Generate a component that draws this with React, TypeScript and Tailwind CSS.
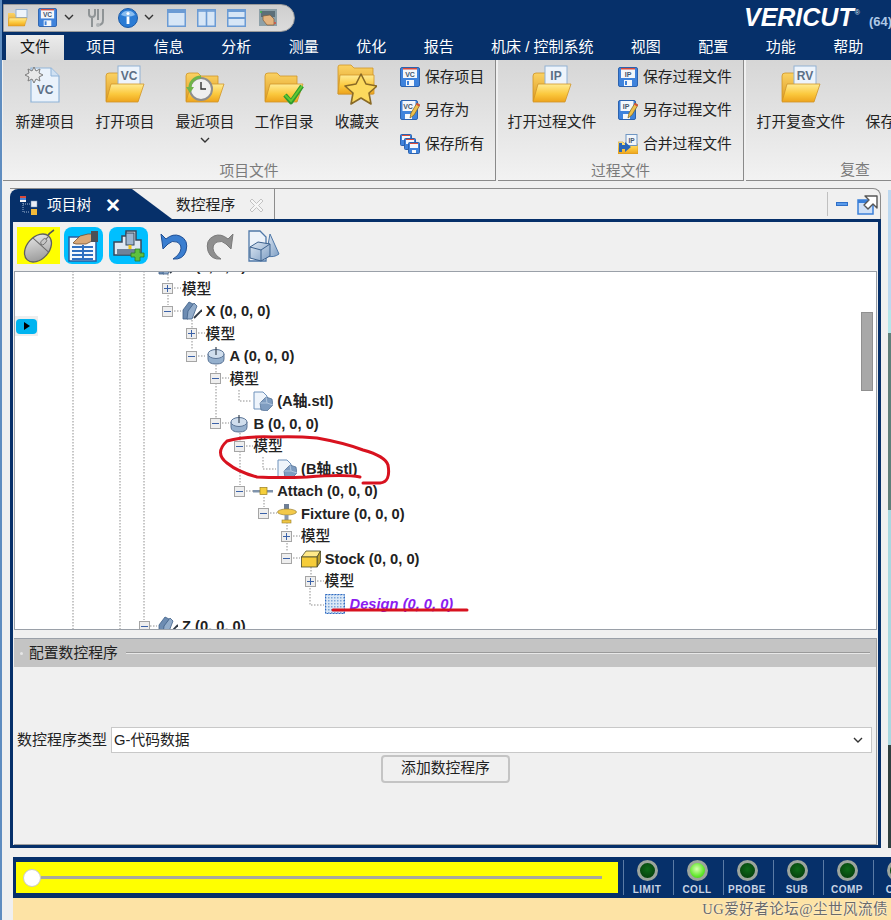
import { ReactNode } from 'react';

const NAVY = 'bg-[#06306a]';

type TreeRow = {
  depth: number;
  toggle?: '+' | '-';
  icon?: ReactNode;
  label: string;
  kind?: 'model' | 'node' | 'design';
};

function Defs() {
  return (
    <svg width="0" height="0" className="block">
      <defs>
        <linearGradient id="folderFront" x1="0" y1="0" x2="0" y2="1">
          <stop offset="0" stopColor="#ffeb94" />
          <stop offset="0.55" stopColor="#fbc93e" />
          <stop offset="1" stopColor="#eda31c" />
        </linearGradient>
        <linearGradient id="folderBack" x1="0" y1="0" x2="0" y2="1">
          <stop offset="0" stopColor="#fbd263" />
          <stop offset="1" stopColor="#dc9a22" />
        </linearGradient>
        <linearGradient id="steel" x1="0" y1="0" x2="1" y2="1">
          <stop offset="0" stopColor="#dfe9f4" />
          <stop offset="1" stopColor="#7f9fc4" />
        </linearGradient>
        <linearGradient id="mouse" x1="0" y1="0" x2="1" y2="1">
          <stop offset="0" stopColor="#f0f0f0" />
          <stop offset="1" stopColor="#8d8d8d" />
        </linearGradient>
      </defs>
    </svg>
  );
}

function FolderBack() {
  return (
    <>
      <path d="M1 11 Q1 8 4 8 H13 L16 11 H33 V36 H1 Z" fill="url(#folderBack)" stroke="#cf9426" strokeWidth="0.8" />
    </>
  );
}

function FolderFront() {
  return <path d="M6 19 H39 L33 37 H1 Z" fill="url(#folderFront)" stroke="#d0952a" strokeWidth="0.8" />;
}

// folder with a small paper tag sticking out (VC / IP / RV)
function TagFolder({ tag }: { tag: string }) {
  return (
    <svg width="40" height="40" viewBox="0 0 40 40">
      <FolderBack />
      <rect x="13" y="1" width="22" height="20" fill="#eef4fb" stroke="#92b2d4" />
      <text x="24" y="15" textAnchor="middle" fontSize="12" fontWeight="700" fill="#5c6f86" fontFamily="Liberation Sans">
        {tag}
      </text>
      <FolderFront />
    </svg>
  );
}

function NewPage() {
  return (
    <svg width="40" height="40" viewBox="0 0 40 40">
      <path d="M6 3 H26 L34 11 V37 H6 Z" fill="#eaf2fb" stroke="#8fb3d8" strokeWidth="1.2" />
      <path d="M26 3 V11 H34" fill="#cfe0f2" stroke="#8fb3d8" />
      <text x="20" y="29" textAnchor="middle" fontSize="12" fontWeight="700" fill="#5c6f86" fontFamily="Liberation Sans">
        VC
      </text>
      <path d="M6 0 L8 4 L12 2 L11 6 L15 8 L11 10 L12 14 L8 12 L6 16 L4 12 L0 14 L1 10 L-3 8 L1 6 L0 2 L4 4 Z" fill="#e8e8e8" stroke="#7c7c7c" transform="translate(3 2)" />
    </svg>
  );
}

function RecentFolder() {
  return (
    <svg width="40" height="40" viewBox="0 0 40 40">
      <FolderBack />
      <FolderFront />
      <circle cx="16" cy="24" r="11" fill="#efefef" stroke="#8e8e8e" strokeWidth="2" />
      <path d="M16 17 V24 H21" fill="none" stroke="#333" strokeWidth="1.4" />
      <path d="M5 24 A11 11 0 0 1 16 12" fill="none" stroke="#6fb54a" strokeWidth="3" />
      <path d="M1 22 L5 28 L9 22 Z" fill="#6fb54a" />
    </svg>
  );
}

function CheckFolder() {
  return (
    <svg width="40" height="40" viewBox="0 0 40 40">
      <FolderBack />
      <FolderFront />
      <path d="M21 30 L27 37 L38 21" fill="none" stroke="#2f9a2f" strokeWidth="4.5" strokeLinejoin="round" />
      <path d="M21 30 L27 36 L38 21" fill="none" stroke="#62c932" strokeWidth="2" />
    </svg>
  );
}

function StarFolder() {
  return (
    <svg width="40" height="44" viewBox="0 0 40 44" className="-mb-[3px]">
      <path d="M1 3 Q1 1 3 1 H14 L17 4 H36 V30 H1 Z" fill="url(#folderBack)" stroke="#cf9426" strokeWidth="0.8" />
      <path d="M3 11 H37 V30 H1 Z" fill="url(#folderFront)" stroke="#d0952a" strokeWidth="0.8" />
      <path d="M24 10 L29 20 L40 22 L32 29 L34 40 L24 34 L14 40 L16 29 L8 22 L19 20 Z" fill="#fcd95d" stroke="#8a6a26" strokeWidth="1.6" strokeLinejoin="round" />
    </svg>
  );
}

function Floppy({ tag, size = 20 }: { tag: string; size?: number }) {
  return (
    <svg width={size} height={size} viewBox="0 0 20 20">
      <rect x="0.5" y="0.5" width="19" height="19" rx="1.5" fill="#3f83dc" stroke="#2c62ae" />
      <rect x="3" y="1" width="14" height="10" fill="#f4f7fb" />
      <rect x="3" y="1" width="14" height="1.5" fill="#d84b3c" />
      <text x="10" y="9.6" textAnchor="middle" fontSize="7" fontWeight="700" fill="#44566e" fontFamily="Liberation Sans">
        {tag}
      </text>
      <rect x="6" y="13" width="8" height="6" fill="#f4f7fb" />
      <rect x="7" y="14" width="2" height="4" fill="#3f83dc" />
    </svg>
  );
}

function FloppyPen({ tag }: { tag: string }) {
  return (
    <svg width="20" height="20" viewBox="0 0 20 20">
      <rect x="0.5" y="0.5" width="17" height="19" rx="1.5" fill="#3f83dc" stroke="#2c62ae" />
      <rect x="2.5" y="1" width="13" height="10" fill="#f4f7fb" />
      <text x="8" y="9.4" textAnchor="middle" fontSize="7" fontWeight="700" fill="#44566e" fontFamily="Liberation Sans">
        {tag}
      </text>
      <rect x="5" y="14" width="7" height="5" fill="#f4f7fb" />
      <path d="M10 18 L11 13 L17 3 L20 5 L14 15 Z" fill="#eec04b" stroke="#7d6424" strokeWidth="0.7" />
      <path d="M17 3 L20 5 L19 6.5 L16 4.6 Z" fill="#d84b3c" />
    </svg>
  );
}

function FloppyStack() {
  return (
    <svg width="20" height="20" viewBox="0 0 20 20">
      {[0, 4, 8].map((d) => (
        <g key={d} transform={`translate(${d} ${d})`}>
          <rect x="0.5" y="0.5" width="11" height="11" rx="1" fill="#3f83dc" stroke="#2c62ae" />
          <rect x="2" y="1" width="8" height="5" fill="#f4f7fb" />
          <rect x="2" y="1" width="8" height="1" fill="#d84b3c" />
          <rect x="4" y="8" width="4" height="3" fill="#f4f7fb" />
        </g>
      ))}
    </svg>
  );
}

function MergeIcon() {
  return (
    <svg width="20" height="20" viewBox="0 0 20 20">
      <path d="M0 8 H5 L7 10 H20 V20 H0 Z" fill="url(#folderFront)" stroke="#cf9426" strokeWidth="0.6" />
      <rect x="8" y="0.5" width="11" height="11" fill="#f0f5fb" stroke="#6f96c2" />
      <text x="13.5" y="8.6" textAnchor="middle" fontSize="6.5" fontWeight="700" fill="#44566e" fontFamily="Liberation Sans">
        IP
      </text>
      <path d="M1 9 L1 18 L4 18 L4 15 L7 15 L7 18 L13 13 L7 8 L7 11 L4 11 L4 9 Z" fill="#2a66b8" />
    </svg>
  );
}

function QuickFolder() {
  return (
    <svg width="20" height="18" viewBox="0 0 20 18">
      <path d="M0 4 H6 L8 6 H17 V17 H0 Z" fill="url(#folderBack)" />
      <rect x="8" y="0.5" width="11" height="8" fill="#eef4fb" stroke="#92b2d4" />
      <path d="M1 9 H19 L16.5 17 H0 Z" fill="url(#folderFront)" stroke="#d0952a" strokeWidth="0.5" />
    </svg>
  );
}

function QuickTools() {
  return (
    <svg width="18" height="20" viewBox="0 0 18 20">
      <path d="M1 1 V6 Q1 9 4 9 Q7 9 7 6 V1 M4 9 V19" fill="none" stroke="#8f9496" strokeWidth="2" />
      <path d="M10 1 V12 M15 1 V12 Q15 17 10 17" fill="none" stroke="#8f9496" strokeWidth="2" />
      <circle cx="10" cy="17" r="2" fill="#b0b4b6" />
    </svg>
  );
}

function InfoBall() {
  return (
    <svg width="20" height="20" viewBox="0 0 20 20">
      <circle cx="10" cy="10" r="9.5" fill="#2a7bd4" stroke="#1c5ba8" />
      <path d="M3 7 A8 8 0 0 1 17 7 Q10 10 3 7" fill="#89bdf0" />
      <circle cx="10" cy="5.5" r="1.6" fill="#fff" />
      <rect x="8.6" y="8.5" width="2.8" height="7.5" fill="#fff" />
    </svg>
  );
}

function LayoutIcon({ split }: { split: 'top' | 'v' | 'h' }) {
  return (
    <svg width="19" height="18" viewBox="0 0 19 18">
      <rect x="0.75" y="0.75" width="17.5" height="16.5" fill="#d7e6f6" stroke="#6b9bd4" strokeWidth="1.5" />
      {split === 'top' && <rect x="1" y="1" width="17" height="3" fill="#6b9bd4" />}
      {split === 'v' && <path d="M9.5 1 V17 M1 2 H18" stroke="#6b9bd4" strokeWidth="1.6" />}
      {split === 'h' && <path d="M1 9 H18 M1 2 H18" stroke="#6b9bd4" strokeWidth="2" />}
    </svg>
  );
}

function HandScreen() {
  return (
    <svg width="18" height="18" viewBox="0 0 18 18">
      <rect width="18" height="17" fill="#8da0a8" />
      <rect x="2" y="2" width="14" height="6" fill="#5c6f78" />
      <path d="M4 7 L11 6 L15 10 V16 H8 L4 11 Z" fill="#e3b37f" stroke="#7e5c3c" strokeWidth="0.7" />
      <circle cx="2" cy="3" r="1" fill="#3cb44b" />
      <circle cx="16" cy="14" r="1" fill="#d84b3c" />
    </svg>
  );
}

function MouseIcon() {
  return (
    <svg width="36" height="34" viewBox="0 0 36 34">
      <path d="M25 9 Q28 4 33 1" fill="none" stroke="#555" strokeWidth="1.5" />
      <g transform="rotate(42 17 19)">
        <ellipse cx="17" cy="19" rx="11" ry="16" fill="url(#mouse)" stroke="#5f5f5f" strokeWidth="1.3" />
        <path d="M6 15 H28 M17 3 V15" stroke="#6a6a6a" strokeWidth="1" />
        <rect x="15" y="7" width="4" height="7" rx="2" fill="#c5c5c5" stroke="#666" strokeWidth="0.8" />
      </g>
    </svg>
  );
}

function HandList() {
  return (
    <svg width="31" height="32" viewBox="0 0 31 32">
      <rect x="1" y="7" width="27" height="24" fill="#f4f8fd" stroke="#2a5c9e" strokeWidth="1.5" />
      <path d="M4 17 H25 M4 21 H25 M4 25 H25 M4 29 H25 M15 15 V30" stroke="#2f6fc0" strokeWidth="2" />
      <path d="M5 13 L12 6 L20 4 L24 4 V11 L18 14 H8 Z" fill="#d9a878" stroke="#6f4f30" strokeWidth="0.8" />
      <rect x="23" y="1" width="7" height="11" fill="#4a4f56" />
    </svg>
  );
}

function MachinePlus() {
  return (
    <svg width="32" height="32" viewBox="0 0 32 32">
      <path d="M1 12 H9 V6 H13 V1 H23 V10 H28 V25 H1 Z" fill="#dfe8f2" stroke="#37485c" strokeWidth="1.5" />
      <rect x="13" y="3" width="8" height="12" fill="#9fb6d0" stroke="#37485c" />
      <rect x="15.5" y="15" width="3" height="5" fill="#efc318" />
      <rect x="4" y="19" width="18" height="5" fill="#6f8299" />
      <path d="M19 24 H23 V20 H28 V24 H32 V28 H28 V32 H23 V28 H19 Z" fill="#5fc13d" stroke="#2a7a2a" strokeWidth="0.8" transform="translate(-1 -1)" />
    </svg>
  );
}

function UndoArrow({ grey }: { grey?: boolean }) {
  const fill = grey ? '#8f8f8f' : '#3a7ed0';
  const edge = grey ? '#7a7a7a' : '#1f4f95';
  return (
    <svg width="28" height="30" viewBox="0 0 28 30">
      <path
        d="M1 3 L3 18 L8 13 Q12 9 17 11 Q23 14 20 21 Q18 25 13 28 Q23 29 26 20 Q29 9 20 5 Q13 2 6 8 Z"
        fill={fill}
        stroke={edge}
        strokeWidth="1"
        strokeLinejoin="round"
      />
    </svg>
  );
}

function ShapesIcon() {
  return (
    <svg width="32" height="32" viewBox="0 0 32 32">
      <path d="M1 1 H12 L18 7 V31 H1 Z" fill="#edf3fa" stroke="#4f78a8" strokeWidth="1.3" />
      <path d="M22 4 L31 24 Q26 28 18 26 Z" fill="url(#steel)" stroke="#4f78a8" />
      <path d="M2 17 L10 12 L22 14 V26 L13 31 L2 28 Z" fill="url(#steel)" stroke="#3d628e" />
      <path d="M2 17 L13 20 L22 14 M13 20 V31" fill="none" stroke="#3d628e" />
    </svg>
  );
}

function TreeMark() {
  return (
    <svg width="20" height="20" viewBox="0 0 20 20">
      <rect x="1" y="0" width="6" height="6" fill="#f5f5f5" />
      <rect x="1" y="0" width="6" height="2" fill="#d84b3c" />
      <rect x="1" y="2" width="6" height="2" fill="#4a86d8" />
      <rect x="12" y="5" width="6" height="6" fill="#e8eef6" stroke="#6f8fb5" strokeWidth="0.5" />
      <rect x="12" y="13" width="6" height="6" fill="#f0b93a" />
      <path d="M4 7 V16 H11 M4 8 H11" fill="none" stroke="#9db5d2" strokeWidth="1" strokeDasharray="1 1" />
    </svg>
  );
}

function AxisIcon() {
  return (
    <svg width="20" height="20" viewBox="0 0 20 20">
      <path d="M1 9 L7 1 L11 3 L6 18 L1 18 Z" fill="#6d8cb2" stroke="#3f5f88" strokeWidth="0.8" />
      <path d="M6 10 L12 2 L15 5 L10 18 L5 18 Z" fill="#93adcb" stroke="#3f5f88" strokeWidth="0.8" />
      <path d="M12 17 L20 9" stroke="#2f3944" strokeWidth="1.8" />
    </svg>
  );
}

function RotaryIcon() {
  return (
    <svg width="20" height="20" viewBox="0 0 20 20">
      <path d="M2 8 V13 Q2 18 10 18 Q18 18 18 13 V8" fill="#95b0cd" stroke="#5a7496" />
      <ellipse cx="10" cy="8" rx="8" ry="4.5" fill="#d0deed" stroke="#5a7496" />
      <path d="M10 1 V9" stroke="#3a4654" strokeWidth="1.2" />
    </svg>
  );
}

function ModelFileIcon() {
  return (
    <svg width="20" height="20" viewBox="0 0 20 20">
      <path d="M1 1 H10 L14 5 V18 H1 Z" fill="#eef4fb" stroke="#6f92bc" />
      <path d="M7 12 L13 6 L19 8 L20 14 L14 20 L8 19 Z" fill="#7e9cc0" stroke="#4b6a90" strokeWidth="0.7" />
      <path d="M13 6 L14 12 L7 12 M14 12 L20 14" fill="none" stroke="#bcd0e6" strokeWidth="0.8" />
    </svg>
  );
}

function AttachIcon() {
  return (
    <svg width="20" height="20" viewBox="0 0 20 20">
      <rect x="0" y="9" width="20" height="2.5" fill="#7f93ac" />
      <rect x="7" y="6.5" width="7" height="7" fill="#f5cf3b" stroke="#9a7e1d" strokeWidth="0.7" />
    </svg>
  );
}

function FixtureIcon() {
  return (
    <svg width="20" height="20" viewBox="0 0 20 20">
      <rect x="7" y="0" width="5" height="5" fill="#6f7f95" />
      <ellipse cx="10" cy="8" rx="9.5" ry="3" fill="#f3c94a" stroke="#99802e" strokeWidth="0.7" />
      <rect x="7.5" y="11" width="4" height="5" fill="#8a98ac" />
      <rect x="5" y="16" width="9" height="3" fill="#f0c644" stroke="#99802e" strokeWidth="0.6" />
    </svg>
  );
}

function StockIcon() {
  return (
    <svg width="20" height="20" viewBox="0 0 20 20">
      <path d="M0.5 8 L5 2 H19.5 L16 8 Z" fill="#ffe98a" stroke="#4d4d2a" strokeWidth="0.8" />
      <path d="M16 8 L19.5 2 V13 L16 18 Z" fill="#b89c2f" stroke="#4d4d2a" strokeWidth="0.8" />
      <rect x="0.5" y="8" width="15.5" height="10" fill="#f6cd3a" stroke="#4d4d2a" strokeWidth="0.8" />
    </svg>
  );
}

function DesignIcon() {
  return (
    <svg width="20" height="20" viewBox="0 0 20 20">
      <defs>
        <pattern id="designDots" width="3" height="3" patternUnits="userSpaceOnUse">
          <rect width="3" height="3" fill="#dbe8f6" />
          <rect width="1.5" height="1.5" fill="#7ea6d8" />
        </pattern>
      </defs>
      <rect x="0.5" y="0.5" width="19" height="19" fill="url(#designDots)" stroke="#2f6bc2" strokeDasharray="2 1" />
    </svg>
  );
}

function Chevron() {
  return (
    <svg width="10" height="7" viewBox="0 0 10 7">
      <path d="M1 1 L5 5 L9 1" fill="none" stroke="#333" strokeWidth="1.4" />
    </svg>
  );
}

function BigButton({ icon, label, width, chevron }: { icon: ReactNode; label: string; width: string; chevron?: boolean }) {
  return (
    <div className={`flex flex-col items-center shrink-0 ${width}`}>
      <div className="h-[45px] flex items-end justify-center">{icon}</div>
      <div className="mt-[7px] text-[14.8px] leading-[20px] text-[#222] whitespace-nowrap">{label}</div>
      {chevron && (
        <div className="mt-[5px]">
          <Chevron />
        </div>
      )}
    </div>
  );
}

function SmallRow({ icon, label }: { icon: ReactNode; label: string }) {
  return (
    <div className="h-[33.5px] flex items-center gap-[5px] whitespace-nowrap text-[14.8px] text-[#222]">
      {icon}
      <span>{label}</span>
    </div>
  );
}

function RibbonGroup({ title, width, children, edge = true }: { title: string; width: string; children: ReactNode; edge?: boolean }) {
  return (
    <div
      className={`flex flex-col shrink-0 border-b border-[#8a8a8a] bg-gradient-to-b from-[#d6d6d6] to-[#f2f2f2] ${width} ${
        edge ? 'border-r' : ''
      }`}
    >
      <div className="flex flex-1">{children}</div>
      <div className="h-[20px] leading-[20px] text-center text-[14.8px] text-[#7b7b7b]">{title}</div>
    </div>
  );
}

const menus = [
  { label: '项目', width: 'w-[67.5px]' },
  { label: '信息', width: 'w-[67.5px]' },
  { label: '分析', width: 'w-[67.5px]' },
  { label: '测量', width: 'w-[67.5px]' },
  { label: '优化', width: 'w-[67.5px]' },
  { label: '报告', width: 'w-[67.5px]' },
  { label: '机床 / 控制系统', width: 'w-[139.5px]' },
  { label: '视图', width: 'w-[67.5px]' },
  { label: '配置', width: 'w-[67.5px]' },
  { label: '功能', width: 'w-[67.5px]' },
  { label: '帮助', width: 'w-[67.5px]' },
];

const treeRows: TreeRow[] = [
  { depth: 0, toggle: '-', icon: <AxisIcon />, label: 'Y (0, 0, 0)', kind: 'node' },
  { depth: 1, toggle: '+', label: '模型', kind: 'model' },
  { depth: 1, toggle: '-', icon: <AxisIcon />, label: 'X (0, 0, 0)', kind: 'node' },
  { depth: 2, toggle: '+', label: '模型', kind: 'model' },
  { depth: 2, toggle: '-', icon: <RotaryIcon />, label: 'A (0, 0, 0)', kind: 'node' },
  { depth: 3, toggle: '-', label: '模型', kind: 'model' },
  { depth: 4, icon: <ModelFileIcon />, label: '(A轴.stl)', kind: 'node' },
  { depth: 3, toggle: '-', icon: <RotaryIcon />, label: 'B (0, 0, 0)', kind: 'node' },
  { depth: 4, toggle: '-', label: '模型', kind: 'model' },
  { depth: 5, icon: <ModelFileIcon />, label: '(B轴.stl)', kind: 'node' },
  { depth: 4, toggle: '-', icon: <AttachIcon />, label: 'Attach (0, 0, 0)', kind: 'node' },
  { depth: 5, toggle: '-', icon: <FixtureIcon />, label: 'Fixture (0, 0, 0)', kind: 'node' },
  { depth: 6, toggle: '+', label: '模型', kind: 'model' },
  { depth: 6, toggle: '-', icon: <StockIcon />, label: 'Stock (0, 0, 0)', kind: 'node' },
  { depth: 7, toggle: '+', label: '模型', kind: 'model' },
  { depth: 7, icon: <DesignIcon />, label: 'Design (0, 0, 0)', kind: 'design' },
  { depth: 0, toggle: '-', icon: <AxisIcon />, label: 'Z (0, 0, 0)', kind: 'node' },
];

const lamps = [
  { label: 'LIMIT' },
  { label: 'COLL', lit: true },
  { label: 'PROBE' },
  { label: 'SUB' },
  { label: 'COMP' },
  { label: 'CYC' },
];

function Toggle({ type }: { type: '+' | '-' }) {
  return (
    <div className="relative w-[11px] h-[11px] shrink-0 border border-[#a5a5a5] bg-[#eeeeee] flex items-center justify-center">
      <div className="w-[7px] h-px bg-[#3b62a8]" />
      {type === '+' && <div className="absolute w-px h-[7px] bg-[#3b62a8]" />}
    </div>
  );
}

function Tree() {
  return (
    <div className="-mt-[17px]">
      {treeRows.map((row, i) => (
        <div
          key={i}
          className="relative h-[22.5px] flex items-center"
          style={{ paddingLeft: 123.5 + row.depth * 23.8 }}
        >
          {row.toggle ? <Toggle type={row.toggle} /> : <div className="w-[11px] shrink-0" />}
          <div className="ml-[8.5px] flex items-center gap-[4px] whitespace-nowrap">
            {row.icon}
            {row.kind === 'model' && <span className="text-[14.8px] font-medium text-[#222]">{row.label}</span>}
            {row.kind === 'node' && <span className="text-[14.7px] font-bold text-[#222]">{row.label}</span>}
            {row.kind === 'design' && <span className="ml-[1px] text-[14.7px] font-bold italic text-[#8a1cf0]">{row.label}</span>}
          </div>
        </div>
      ))}
    </div>
  );
}

// dotted connector lines of the tree, in page coordinates
function TreeLines() {
  const lines = [
    'M73 271 V630', 'M120 271 V630', 'M144 271 V620',
    'M168 271 V305', 'M192 317 V350', 'M216 362 V418', 'M240 430 V485',
    'M264 497 V507', 'M287 519 V552', 'M311 564 V575',
    'M239 390 V401 H252', 'M263 457 V469 H276', 'M310 588 V605 H324',
    'M174 288 H181', 'M174 311 H181', 'M198 333 H205', 'M198 356 H205', 'M222 378 H229',
    'M222 423 H229', 'M246 446 H253', 'M246 491 H253', 'M270 513 H277', 'M293 536 H300',
    'M293 558 H300', 'M317 581 H324', 'M150 626 H157',
  ];
  return (
    <svg className="absolute left-0 top-0" width="861" height="358">
      <g transform="translate(-15 -272)" stroke="#8e8e8e" strokeDasharray="1.5 1.5" fill="none">
        {lines.map((d) => (
          <path key={d} d={d} />
        ))}
      </g>
    </svg>
  );
}

export default function App() {
  return (
    <div className="relative w-[891px] h-[920px] overflow-hidden flex flex-col border-l-2 border-[#5f8dc0] bg-[#f0f0f0] font-['Liberation_Sans','Noto_Sans_CJK_SC',sans-serif]">
      <Defs />

      {/* Title bar */}
      <div className={`h-[34px] shrink-0 flex items-center justify-between pt-px ${NAVY}`}>
        <div className="ml-px w-[292px] h-[28px] rounded-r-[14px] bg-gradient-to-b from-[#cfcfcf] to-[#dcdcdc] border border-[#9a9a9a] flex items-center pl-[4px]">
          <QuickFolder />
          <div className="ml-[10px]">
            <Floppy tag="VC" size={19} />
          </div>
          <div className="ml-[7px]">
            <Chevron />
          </div>
          <div className="ml-[14px]">
            <QuickTools />
          </div>
          <div className="ml-[12px]">
            <InfoBall />
          </div>
          <div className="ml-[6px]">
            <Chevron />
          </div>
          <div className="ml-[13px] flex items-center gap-[11px]">
            <LayoutIcon split="top" />
            <LayoutIcon split="v" />
            <LayoutIcon split="h" />
          </div>
          <div className="ml-[13px]">
            <HandScreen />
          </div>
        </div>
        <div className="flex items-baseline whitespace-nowrap -mr-[1px] mt-[2px]">
          <span className="text-[25px] leading-none font-bold italic text-white">VERICUT</span>
          <span className="text-[7px] text-[#dfe7f2] self-start mt-[3px] ml-px">®</span>
          <span className="ml-[9px] text-[13px] font-bold text-[#aec8e6]">(64)</span>
        </div>
      </div>

      {/* Menu tabs */}
      <div className={`h-[26px] shrink-0 flex items-end pl-[4px] ${NAVY}`}>
        <div className="w-[58px] h-[25px] bg-gradient-to-b from-[#ececec] to-[#d8d8d8] text-center text-[15px] leading-[24px] text-[#111]">
          文件
        </div>
        <div className="ml-[3.5px] flex">
          {menus.map((m) => (
            <div key={m.label} className={`${m.width} h-[25px] text-center text-[15px] leading-[24px] text-white whitespace-nowrap`}>
              {m.label}
            </div>
          ))}
        </div>
      </div>

      {/* Ribbon */}
      <div className="h-[121px] shrink-0 flex gap-[2px] pl-px overflow-hidden">
        <RibbonGroup title="项目文件" width="w-[493px]">
          <div className="w-[2px]" />
          <BigButton icon={<NewPage />} label="新建项目" width="w-[80px]" />
          <BigButton icon={<TagFolder tag="VC" />} label="打开项目" width="w-[80px]" />
          <BigButton icon={<RecentFolder />} label="最近项目" width="w-[80px]" chevron />
          <BigButton icon={<CheckFolder />} label="工作目录" width="w-[78px]" />
          <BigButton icon={<StarFolder />} label="收藏夹" width="w-[68px]" />
          <div className="ml-[9px] flex flex-col">
            <SmallRow icon={<Floppy tag="VC" />} label="保存项目" />
            <SmallRow icon={<FloppyPen tag="VC" />} label="另存为" />
            <SmallRow icon={<FloppyStack />} label="保存所有" />
          </div>
        </RibbonGroup>
        <RibbonGroup title="过程文件" width="w-[246px]">
          <BigButton icon={<TagFolder tag="IP" />} label="打开过程文件" width="w-[108px]" />
          <div className="ml-[12px] flex flex-col">
            <SmallRow icon={<Floppy tag="IP" />} label="保存过程文件" />
            <SmallRow icon={<FloppyPen tag="IP" />} label="另存过程文件" />
            <SmallRow icon={<MergeIcon />} label="合并过程文件" />
          </div>
        </RibbonGroup>
        <RibbonGroup title="复查" width="w-[218px]" edge={false}>
          <BigButton icon={<TagFolder tag="RV" />} label="打开复查文件" width="w-[110px]" />
          <BigButton icon={<div />} label="保存复查文件" width="w-[108px]" />
        </RibbonGroup>
      </div>

      {/* Panel row */}
      <div className="mt-[7px] h-[660px] shrink-0 flex pl-[8px]">
        <div className="w-[871px] flex flex-col">
          {/* Panel tabs */}
          <div className="h-[31px] shrink-0 flex border-t border-r border-[#8c8c8c] rounded-tr-lg">
            <div className={`w-[162px] h-full flex items-center pl-[9px] pt-[3px] rounded-tl-lg [clip-path:polygon(0_0,122px_0,162px_100%,0_100%)] ${NAVY}`}>
              <TreeMark />
              <span className="ml-[8px] text-[14.8px] text-white">项目树</span>
              <span className="ml-[14px] text-[19px] leading-none font-bold text-white">✕</span>
            </div>
            <div className="w-[103px] h-full flex items-center border-r border-[#8c8c8c] pl-[4px] pt-[3px] whitespace-nowrap">
              <span className="text-[14.8px] text-[#222]">数控程序</span>
              <svg className="ml-[14px]" width="15" height="15" viewBox="0 0 15 15">
                <path d="M1 3 L3 1 L7.5 5.5 L12 1 L14 3 L9.5 7.5 L14 12 L12 14 L7.5 9.5 L3 14 L1 12 L5.5 7.5 Z" fill="#f6f6f6" stroke="#c2c2c2" />
              </svg>
            </div>
            <div className="flex-1 flex items-center justify-end pr-[2px]">
              <div className="w-px h-[24px] bg-[#c0c0c0]" />
              <div className="ml-[8px] w-[12px] h-[4px] bg-[#5a9bea] border border-[#2f6fc8]" />
              <svg className="ml-[9px]" width="21" height="21" viewBox="0 0 21 21">
                <rect x="1" y="6" width="15" height="14" fill="#cfe0f6" stroke="#3a7fd8" strokeWidth="1.5" />
                <rect x="1" y="6" width="15" height="3" fill="#3a7fd8" />
                <path d="M8 2 H20 V14 L16 10 L11 15 L7 11 L12 6 Z" fill="#fff" stroke="#555" strokeWidth="1.4" strokeLinejoin="round" />
              </svg>
            </div>
          </div>

          {/* Panel body */}
          <div className="flex-1 flex flex-col border-[3px] border-[#06306a] bg-[#f0f0f0]">
            <div className="h-[49px] shrink-0 flex items-center pl-[4px] pb-[2px]">
              <div className="w-[43px] h-[37px] bg-[#ffff00] flex items-center justify-center">
                <MouseIcon />
              </div>
              <div className="ml-[4px] w-[39px] h-[37px] rounded-lg bg-[#00bfff] flex items-center justify-center">
                <HandList />
              </div>
              <div className="ml-[6px] w-[39px] h-[37px] rounded-lg bg-[#00bfff] flex items-center justify-center">
                <MachinePlus />
              </div>
              <div className="ml-[12px]">
                <UndoArrow />
              </div>
              <div className="ml-[18px] -scale-x-100">
                <UndoArrow grey />
              </div>
              <div className="ml-[14px]">
                <ShapesIcon />
              </div>
            </div>

            {/* Tree */}
            <div className="relative mx-px h-[359px] shrink-0 overflow-hidden bg-white border border-[#9aa0a8]">
              <TreeLines />
              <Tree />
              <div className="absolute left-0 top-[44px] w-[23px] h-[20px] bg-[#eeeeee] flex items-center justify-center">
                <div className="w-[21px] h-[15px] rounded-sm bg-[#00b4f0] flex items-center justify-center">
                  <div className="w-0 h-0 border-y-[4.5px] border-y-transparent border-l-[6px] border-l-black" />
                </div>
              </div>
              <div className="absolute left-[846px] top-[40px] w-[12px] h-[79px] bg-[#a8a8a8] border border-[#909090]" />
            </div>

            {/* Config */}
            <div className="mx-px mt-[8px] flex-1 flex flex-col border-b border-r border-[#a0a0a0]">
              <div className="h-[29px] shrink-0 flex items-center pl-[6px] bg-[#c4c4c4] border-t border-[#9aa0a8]">
                <div className="w-[3px] h-[3px] rounded-full bg-[#e6e6e6]" />
                <span className="ml-[6px] text-[14.8px] text-[#222] whitespace-nowrap">配置数控程序</span>
                <div className="ml-[8px] mr-[6px] flex-1 h-[2px] bg-[#e8e8e8] border-t border-[#9a9a9a]" />
              </div>
              <div className="mt-[60px] flex items-center pl-[3px]">
                <span className="text-[15px] text-[#222] whitespace-nowrap">数控程序类型</span>
                <div className="ml-[4px] flex-1 mr-[4px] h-[26px] bg-white border border-[#c8c8c8] flex items-center justify-between pl-[2px] pr-[8px]">
                  <span className="text-[14.8px] text-[#222]">G-代码数据</span>
                  <Chevron />
                </div>
              </div>
              <div className="mt-[2px] flex pl-[367px]">
                <div className="w-[129px] h-[28px] rounded-[4px] border-2 border-[#c4c4c4] bg-[#f0f0f0] text-center text-[14.8px] leading-[23px] text-[#222]">
                  添加数控程序
                </div>
              </div>
            </div>
          </div>
        </div>

        {/* Sliver of the graphics view */}
        <div className="ml-[7px] mt-[2px] w-[3px] flex flex-col">
          <div className="h-[120px] bg-[#bcd8f0]" />
          <div className="h-[23px] bg-[#b4e6ea]" />
          <div className="h-[177px] bg-[#5f7f7a]" />
          <div className="h-[235px] bg-[#a8d8e0]" />
          <div className="flex-1 bg-[#2f4040]" />
        </div>
      </div>

      {/* Status bar */}
      <div className={`mt-[9px] ml-[11px] h-[41px] shrink-0 flex items-center pl-[3px] ${NAVY}`}>
        <div className="w-[602px] h-[31px] shrink-0 bg-[#ffff00] flex items-center pl-[7px] pr-[16px]">
          <div className="w-[18px] h-[18px] shrink-0 rounded-full bg-white border border-[#c8c8c8]" />
          <div className="flex-1 h-[3px] bg-[#a8a8a0]" />
        </div>
        <div className="ml-[5px] flex shrink-0">
          {lamps.map((l) => (
            <div key={l.label} className="w-[50px] shrink-0 flex flex-col items-center border-l border-[#5a7ba5] pr-[3px]">
              <div
                className={`w-[21px] h-[21px] rounded-full border-[3px] border-[#9ca59c] ${
                  l.lit
                    ? 'bg-[radial-gradient(circle_at_45%_40%,#d8ffb0,#5fe82a_60%,#3fb51c)]'
                    : 'bg-[radial-gradient(circle_at_50%_40%,#0e6a18,#04350a)]'
                }`}
              />
              <span className="mt-[3px] text-[10px] leading-[11px] font-bold tracking-[0.5px] text-[#c8d4e4]">{l.label}</span>
            </div>
          ))}
        </div>
      </div>

      {/* Message strip */}
      <div className="ml-[11px] flex-1 bg-[#fde3a5] flex items-start justify-end pr-[3px] pt-[2px]">
        <span className="text-[14.5px] leading-[18px] tracking-[0.5px] text-[#6a6a6a] [text-shadow:0_0_2px_#ffffff] font-['Liberation_Serif','Noto_Sans_CJK_SC',serif] whitespace-nowrap">
          UG爱好者论坛@尘世风流债
        </span>
      </div>

      {/* Red pen marks on the screenshot */}
      <svg className="absolute -left-[2px] top-0 pointer-events-none" width="891" height="920">
        <path
          d="M360 477 Q345 474 307 477 Q280 478 257 477 Q238 472 227 463 Q214 453 227 441 Q245 436 273 437 Q295 436 317 438 Q345 443 363 450 Q385 456 388 465 Q391 482 380 483 L363 483"
          fill="none"
          stroke="#d8121f"
          strokeWidth="3"
          strokeLinecap="round"
        />
        <path d="M333 610 H467" stroke="#d8121f" strokeWidth="3" strokeLinecap="round" />
      </svg>
    </div>
  );
}
